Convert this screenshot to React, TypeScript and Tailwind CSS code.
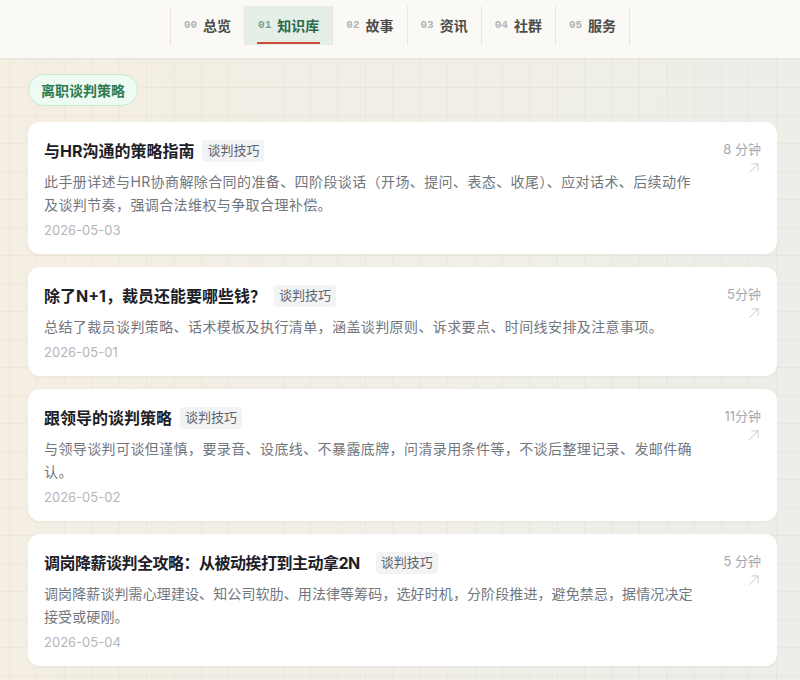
import React from "react";

const tabs = [
  { n: "00", label: "总览" },
  { n: "01", label: "知识库", active: true },
  { n: "02", label: "故事" },
  { n: "03", label: "资讯" },
  { n: "04", label: "社群" },
  { n: "05", label: "服务" },
];

type Item = {
  title: string;
  desc: string;
  date: string;
  time: string;
  alt?: boolean;
};

const items: Item[] = [
  {
    title: "与HR沟通的策略指南",
    desc: "此手册详述与HR协商解除合同的准备、四阶段谈话（开场、提问、表态、收尾）、应对话术、后续动作及谈判节奏，强调合法维权与争取合理补偿。",
    date: "2026-05-03",
    time: "8 分钟",
  },
  {
    title: "除了N+1，裁员还能要哪些钱？",
    desc: "总结了裁员谈判策略、话术模板及执行清单，涵盖谈判原则、诉求要点、时间线安排及注意事项。",
    date: "2026-05-01",
    time: "5分钟",
  },
  {
    title: "跟领导的谈判策略",
    desc: "与领导谈判可谈但谨慎，要录音、设底线、不暴露底牌，问清录用条件等，不谈后整理记录、发邮件确认。",
    date: "2026-05-02",
    time: "11分钟",
  },
  {
    title: "调岗降薪谈判全攻略：从被动挨打到主动拿2N",
    desc: "调岗降薪谈判需心理建设、知公司软肋、用法律等筹码，选好时机，分阶段推进，避免禁忌，据情况决定接受或硬刚。",
    date: "2026-05-04",
    time: "5 分钟",
    alt: true,
  },
];

function Arrow() {
  return (
    <svg width="14" height="14" viewBox="0 0 24 24" fill="none" stroke="#c2c6cb" strokeWidth="1.5" strokeLinecap="round" strokeLinejoin="round">
      <path d="M4 20 19 5" />
      <path d="M8 5h11v11" />
    </svg>
  );
}

function Card({ item }: { item: Item }) {
  return (
    <div className="flex rounded-[12px] bg-white pl-[16px] pr-[16px] pt-[17px] pb-[14px] shadow-[0_1px_3px_rgba(60,50,30,0.05)]">
      <div className="w-[657px]">
        <div className={item.alt ? "flex h-6 items-center gap-4" : "flex h-6 items-center gap-2"}>
          <span className={item.alt ? "text-[16px] font-bold leading-6 tracking-[-0.5px] text-[#1d2026]" : "text-[16px] font-bold leading-6 text-[#1d2026]"}>
            {item.title}
          </span>
          <span className="flex h-[22px] items-center rounded-[4px] bg-[#f2f3f5] px-[5px] text-[13px] text-[#5f646c]">
            谈判技巧
          </span>
        </div>
        <p className={item.alt ? "mt-[7px] text-[14px] leading-[23px] tracking-[0.1px] text-[#72767d]" : "mt-[7px] text-[14px] leading-[23px] tracking-[0.4px] text-[#72767d]"}>
          {item.desc}
        </p>
        <div className="mt-[4px] text-[13px] leading-5 text-[#b2b6bc]">{item.date}</div>
      </div>
      <div className="flex flex-1 flex-col items-end">
        <div className="text-[13px] leading-5 text-[#a4a8ae]">{item.time}</div>
        <div className="mt-[2px]">
          <Arrow />
        </div>
      </div>
    </div>
  );
}

export default function App() {
  return (
    <div className="min-h-[680px] w-[800px] font-['Inter','Noto_Sans_CJK_SC',sans-serif] bg-[linear-gradient(rgba(80,70,40,0.045)_1px,transparent_1px),linear-gradient(90deg,rgba(80,70,40,0.045)_1px,transparent_1px),linear-gradient(100deg,#f5eee2,#f1eee6_45%,#eceee9)] bg-size-[27.4px_28px,27.4px_28px,100%_100%] bg-[position:9px_3px,9px_3px,0_0]">
      <nav className="flex h-[59px] justify-center border-b border-[#ebe8e0] bg-[#faf9f5] pt-[6px]">
        <div className="flex h-[39px] border-r border-[#e9e5dd]">
          {tabs.map((t) => (
            <div
              key={t.n}
              className={
                t.active
                  ? "relative flex items-center gap-[6px] border-l border-[#e9e5dd] bg-[#e6eee8] px-[13px]"
                  : "relative flex items-center gap-[6px] border-l border-[#e9e5dd] px-[13px]"
              }
            >
              <span className={t.active ? "font-['Liberation_Mono',monospace] text-[11px] font-bold text-[#7aa38c]" : "font-['Liberation_Mono',monospace] text-[11px] font-bold text-[#b3b3b3]"}>
                {t.n}
              </span>
              <span className={t.active ? "text-[14px] font-semibold text-[#2c6a4c]" : "text-[14px] font-semibold text-[#4c4c4a]"}>
                {t.label}
              </span>
              {t.active && <span className="absolute bottom-[1px] left-[12px] right-[12px] h-[2px] bg-[#cf4a32]" />}
            </div>
          ))}
        </div>
      </nav>
      <main className="pl-[28px] pr-[23px] pt-[15px] pb-[12px]">
        <div className="inline-flex h-[32px] items-center rounded-full border border-[#c6ebd4] bg-[#edfbf2] px-[12px] text-[14px] font-semibold text-[#2f7a50]">
          离职谈判策略
        </div>
        <div className="mt-[16px] flex flex-col gap-[13px]">
          {items.map((it) => (
            <Card key={it.date} item={it} />
          ))}
        </div>
      </main>
    </div>
  );
}
